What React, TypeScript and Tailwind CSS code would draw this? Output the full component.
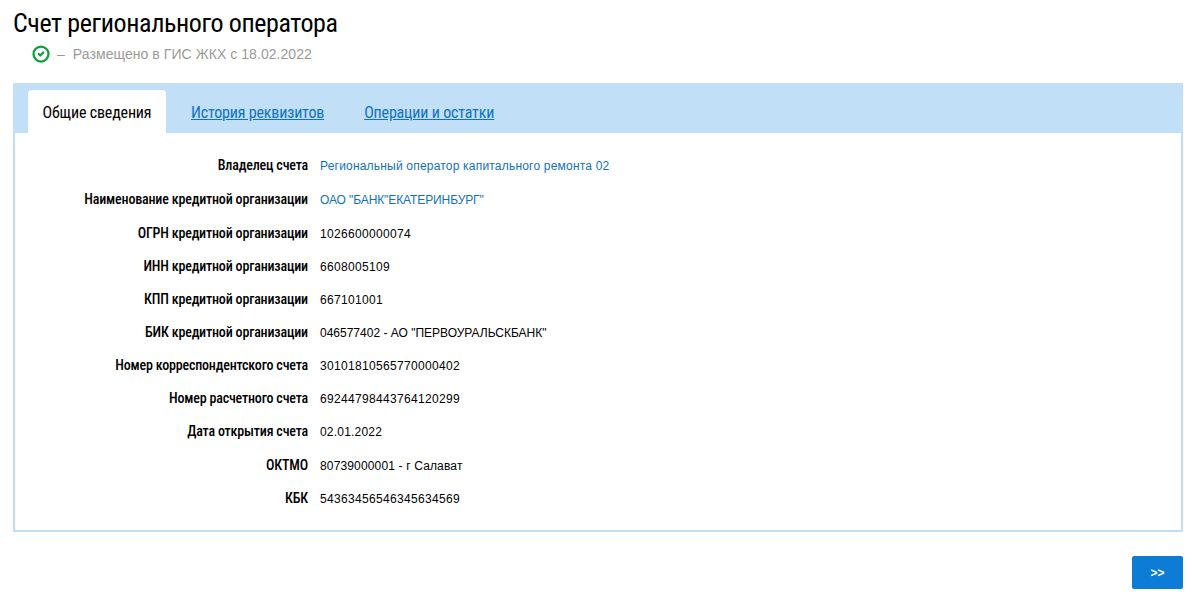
import { CircleCheck } from "lucide-react";

const rows = [
  { label: "Владелец счета", value: "Региональный оператор капитального ремонта 02", tall: true, cls: "text-[#0f72bd] tracking-[0.2px]" },
  { label: "Наименование кредитной организации", value: 'ОАО "БАНК"ЕКАТЕРИНБУРГ"', tall: true, cls: "text-[#0f72bd] tracking-[-0.1px]" },
  { label: "ОГРН кредитной организации", value: "1026600000074", cls: "tracking-[0.33px]" },
  { label: "ИНН кредитной организации", value: "6608005109", cls: "tracking-[0.33px]" },
  { label: "КПП кредитной организации", value: "667101001", cls: "tracking-[0.33px]" },
  { label: "БИК кредитной организации", value: '046577402 - АО "ПЕРВОУРАЛЬСКБАНК"', cls: "" },
  { label: "Номер корреспондентского счета", value: "30101810565770000402", cls: "tracking-[0.33px]" },
  { label: "Номер расчетного счета", value: "69244798443764120299", cls: "tracking-[0.33px]" },
  { label: "Дата открытия счета", value: "02.01.2022", tall: true, cls: "tracking-[0.2px]" },
  { label: "ОКТМО", value: "80739000001 - г Салават", cls: "tracking-[0.15px]" },
  { label: "КБК", value: "54363456546345634569", cls: "tracking-[0.33px]" },
];

const condensed = "font-['Roboto',sans-serif] [font-stretch:75%]";

export default function App() {
  return (
    <div className="min-h-[599px] bg-white px-[13px] pt-[8px] pr-[9px] font-['Liberation_Sans',Arial,sans-serif] text-black">
      <h1 className={`h-[30px] text-[26px] leading-[30px] font-normal tracking-[-0.4px] ${condensed}`}>
        Счет регионального оператора
      </h1>
      <div className="mt-[7px] flex h-[18px] items-center pl-[19px] text-[14px] tracking-[0.06px] text-[#999999]">
        <CircleCheck className="h-[18px] w-[18px] text-[#0a9e3a]" strokeWidth={3} />
        <span className="ml-[7px]">–</span>
        <span className="ml-[8px]">Размещено в ГИС ЖКХ с 18.02.2022</span>
      </div>

      <div className="mt-[20px] border-2 border-t-0 border-[#c1dff7]">
        <div className="-mx-[2px] flex h-[50px] items-end bg-[#c1dff7] pl-[15px]">
          <div className={`flex h-[43px] w-[138px] items-center justify-center rounded-t-[4px] bg-white pt-[2px] text-[16px] tracking-[-0.17px] ${condensed}`}>
            Общие сведения
          </div>
          <a href="#" className={`ml-[25px] flex h-[43px] items-center pt-[2px] text-[16px] tracking-[-0.18px] text-[#0f72bd] underline ${condensed}`}>
            История реквизитов
          </a>
          <a href="#" className={`ml-[40px] flex h-[43px] items-center pt-[2px] text-[16px] tracking-[-0.18px] text-[#0f72bd] underline ${condensed}`}>
            Операции и остатки
          </a>
        </div>
        <div className="pt-[15px] pb-[16px]">
          {rows.map((r) => (
            <div key={r.label} className={`flex items-center ${r.tall ? "h-[34px]" : "h-[33px]"}`}>
              <div className={`w-[293px] text-right text-[14px] leading-[18px] font-medium tracking-[-0.18px] text-black ${condensed}`}>{r.label}</div>
              <div className={`ml-[12px] text-[12px] leading-[18px] ${r.tall ? "pt-[1px]" : "pt-[2px]"} ${r.cls}`}>
                {r.value}
              </div>
            </div>
          ))}
        </div>
      </div>

      <div className="mt-[24px] flex justify-end">
        <button className="flex h-[33px] w-[51px] items-center justify-center rounded-[2px] bg-[#0d7cd6] text-[12px] font-bold text-white">
          &gt;&gt;
        </button>
      </div>
    </div>
  );
}
